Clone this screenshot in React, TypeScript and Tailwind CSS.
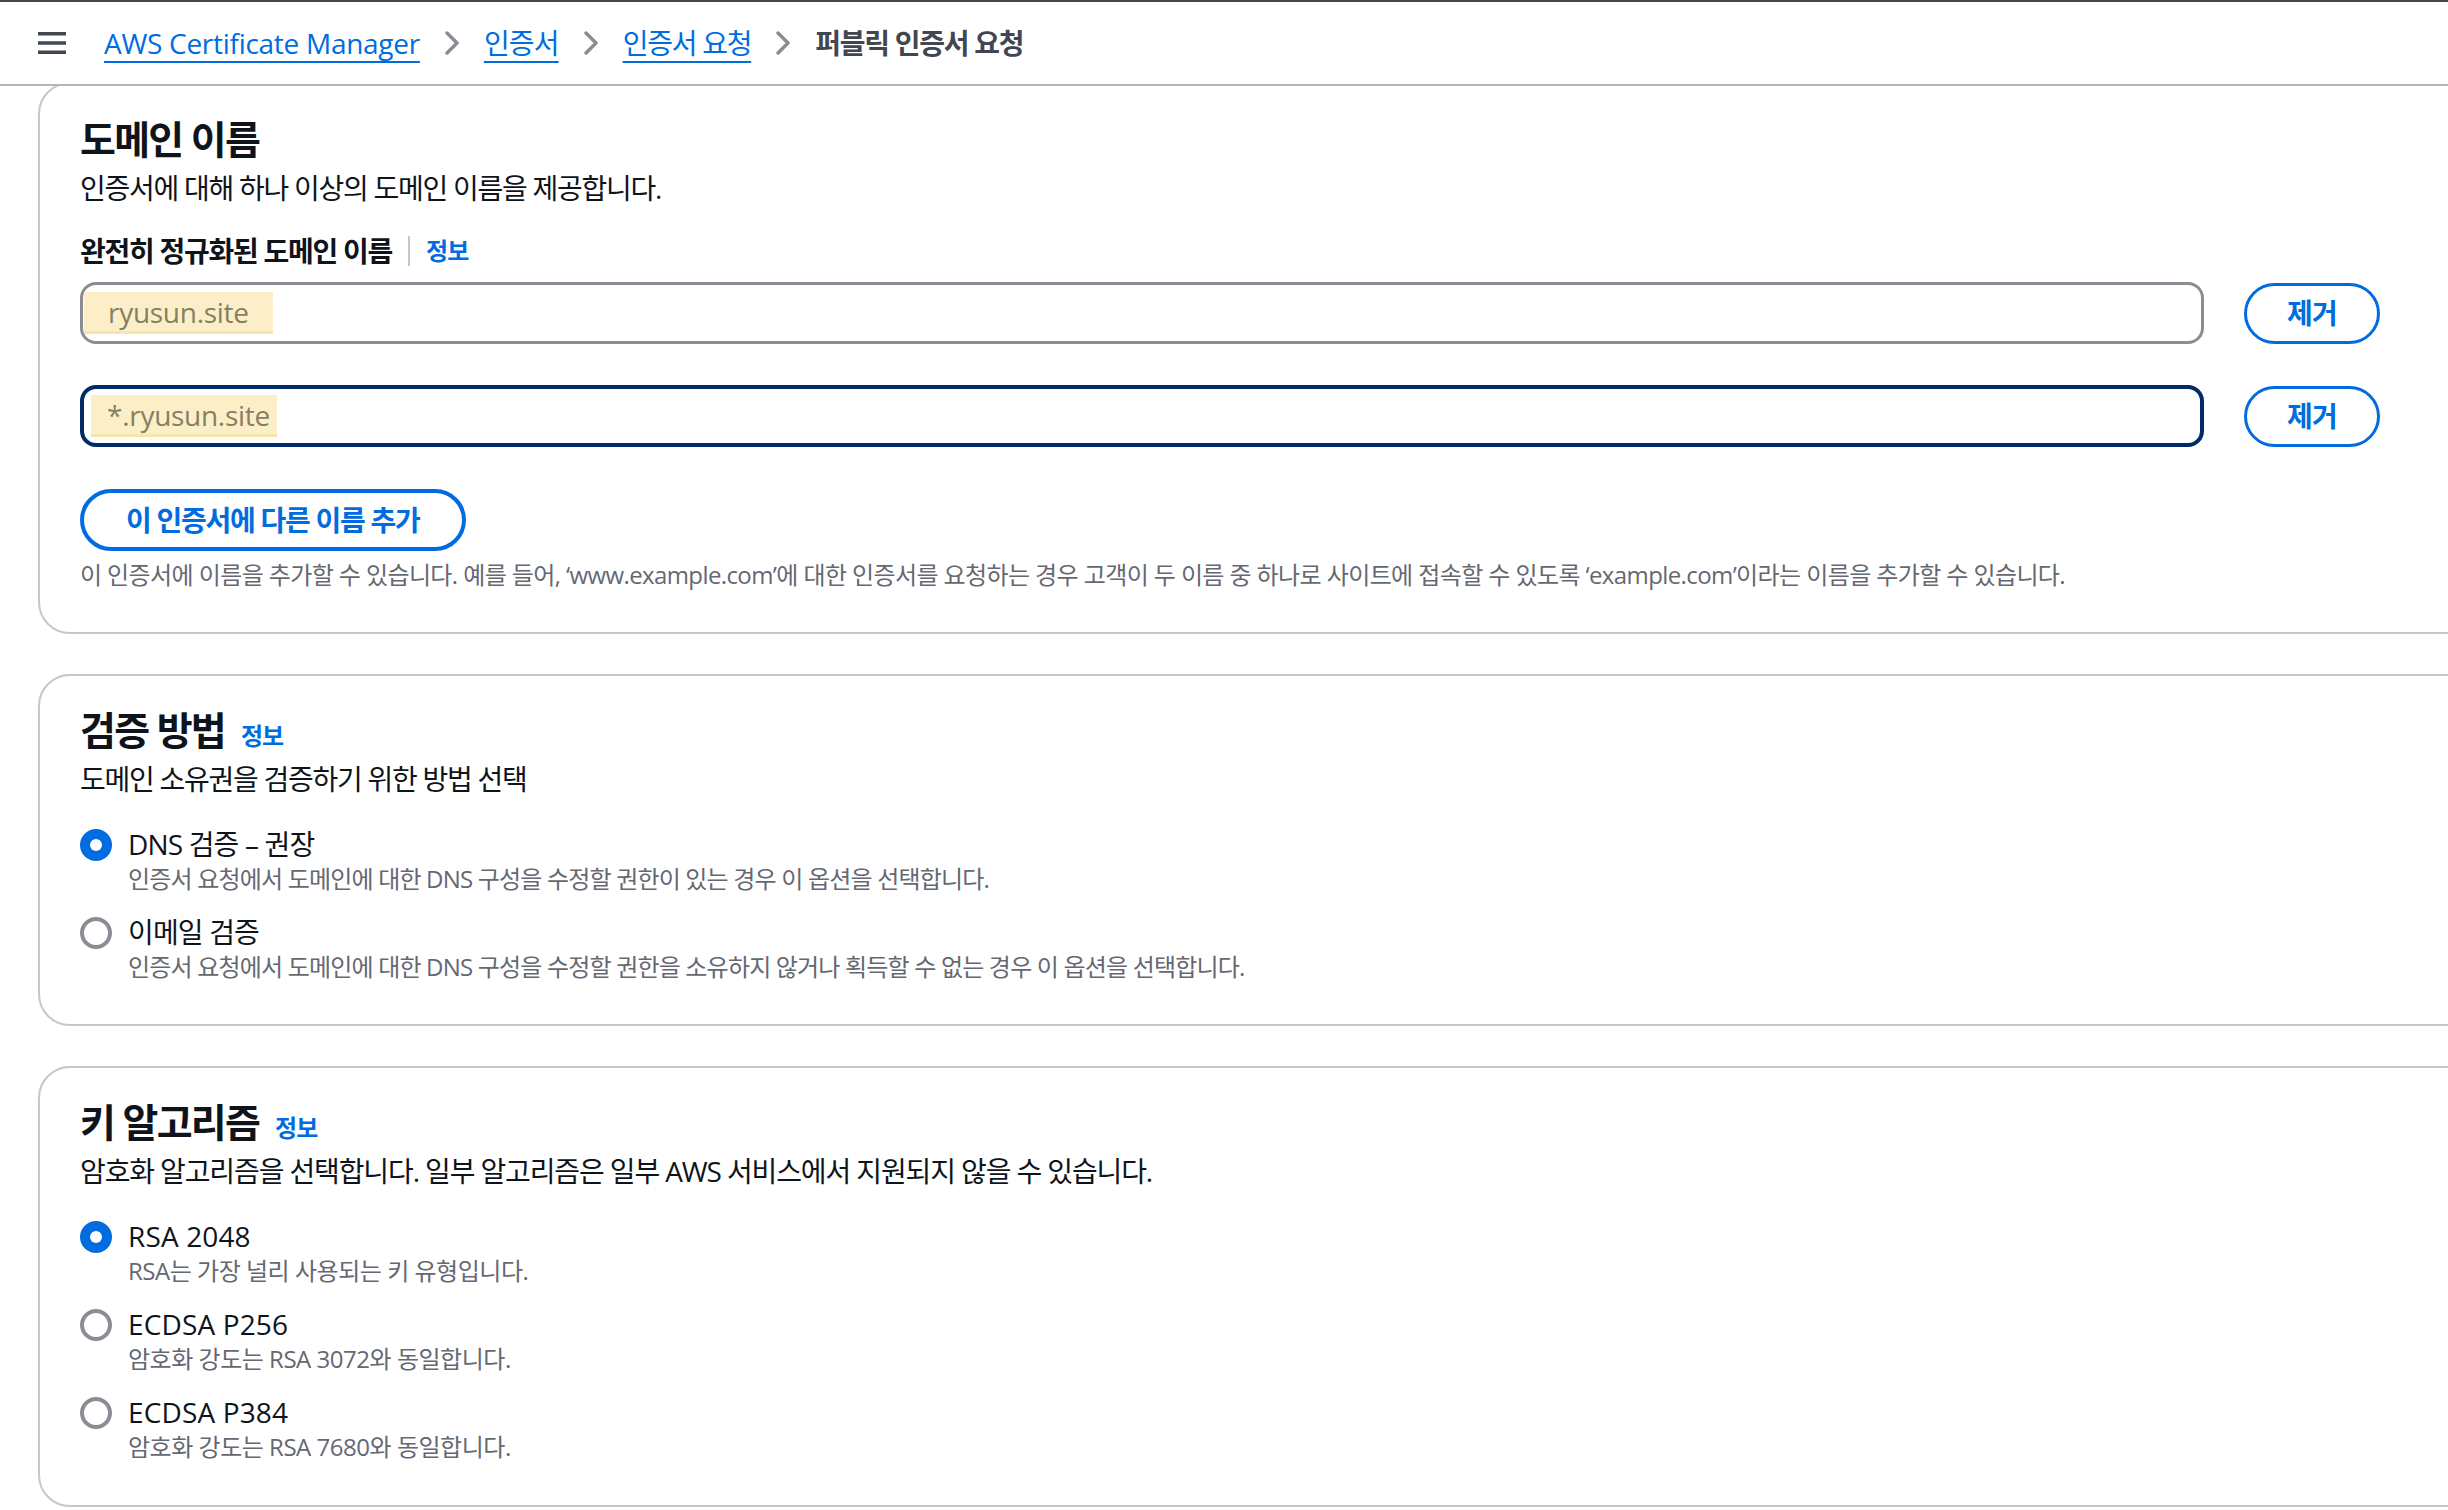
import React from 'react';

const FONT = { fontFamily: '"Open Sans", "Noto Sans CJK KR", sans-serif' };

function Chevron() {
  return (
    <svg width="16" height="24" viewBox="0 0 16 24" className="shrink-0">
      <path d="M3 2 L13 12 L3 22" fill="none" stroke="#8c8c94" strokeWidth="3.5" strokeLinecap="round" strokeLinejoin="round" />
    </svg>
  );
}

function InfoLink() {
  return <span className="text-[24px] font-bold leading-[32px] tracking-[-0.04em] text-[#006ce0]">정보</span>;
}

function Radio({ checked }: { checked: boolean }) {
  return (
    <svg width="32" height="32" viewBox="0 0 32 32" className="shrink-0">
      {checked ? (
        <>
          <circle cx="16" cy="16" r="16" fill="#006ce0" />
          <circle cx="16" cy="16" r="6" fill="#fff" />
        </>
      ) : (
        <circle cx="16" cy="16" r="14" fill="#fff" stroke="#8c8c94" strokeWidth="4" />
      )}
    </svg>
  );
}

type Option = { label: string; desc: string; checked: boolean; latin?: boolean };

const VALIDATION: Option[] = [
  { label: 'DNS 검증 – 권장', desc: '인증서 요청에서 도메인에 대한 DNS 구성을 수정할 권한이 있는 경우 이 옵션을 선택합니다.', checked: true },
  { label: '이메일 검증', desc: '인증서 요청에서 도메인에 대한 DNS 구성을 수정할 권한을 소유하지 않거나 획득할 수 없는 경우 이 옵션을 선택합니다.', checked: false },
];

const ALGORITHMS: Option[] = [
  { label: 'RSA 2048', desc: 'RSA는 가장 널리 사용되는 키 유형입니다.', checked: true, latin: true },
  { label: 'ECDSA P256', desc: '암호화 강도는 RSA 3072와 동일합니다.', checked: false, latin: true },
  { label: 'ECDSA P384', desc: '암호화 강도는 RSA 7680와 동일합니다.', checked: false, latin: true },
];

function RadioGroup({ items }: { items: Option[] }) {
  return (
    <div className="mt-[27px] flex flex-col gap-[19px]">
      {items.map((it) => (
        <div key={it.label} className="flex gap-[16px]">
          <div className="pt-[3px]">
            <Radio checked={it.checked} />
          </div>
          <div className="flex flex-col">
            <span className={`text-[28px] leading-[36px] text-[#0f141a] ${it.latin ? 'tracking-[0.005em]' : 'tracking-[-0.03em]'}`}>
              {it.label}
            </span>
            <span className={`mt-[1px] text-[24px] leading-[32px] text-[#656871] ${it.latin ? 'tracking-[-0.02em]' : 'tracking-[-0.034em]'}`}>
              {it.desc}
            </span>
          </div>
        </div>
      ))}
    </div>
  );
}

function DomainInput({ value, focused }: { value: string; focused?: boolean }) {
  return (
    <div className="flex items-center gap-[40px]">
      <div
        className={`flex h-[62px] flex-1 items-center rounded-[16px] bg-white ${
          focused ? 'border-[4px] border-[#002b66] pl-[7px]' : 'border-[3px] border-[#8c8c94] pl-[1px]'
        }`}
      >
        <span
          className={`flex h-[42px] items-center border-b-[3px] border-[#f6e6ae] bg-[#fcefc8] text-[28px] tracking-[-0.01em] text-[#857f63] ${
            focused ? 'pl-[16px] pr-[7px]' : 'pl-[24px] pr-[24px]'
          }`}
        >
          {value}
        </span>
      </div>
      <button className="mr-[66px] h-[61px] w-[136px] rounded-full border-[3px] border-[#006ce0] text-[28px] font-bold tracking-[-0.03em] text-[#006ce0]">
        제거
      </button>
    </div>
  );
}

export default function App() {
  return (
    <div className="relative h-[1510px] w-[2448px] overflow-hidden bg-white" style={FONT}>
      <div className="h-[2px] bg-[#3f4650]" />
      <header className="relative z-10 flex h-[84px] items-center gap-[38px] border-b-2 border-[#b4b4bb] bg-white pl-[38px]">
        <svg width="28" height="24" viewBox="0 0 28 24" className="shrink-0">
          <rect x="0" y="1" width="28" height="3.5" fill="#414750" />
          <rect x="0" y="10.25" width="28" height="3.5" fill="#414750" />
          <rect x="0" y="19.5" width="28" height="3.5" fill="#414750" />
        </svg>
        <nav className="flex items-center gap-[24px] text-[28px] leading-[40px]">
          <a className="text-[#006ce0] underline decoration-2 underline-offset-[7px] tracking-[-0.01em]">AWS Certificate Manager</a>
          <Chevron />
          <a className="text-[#006ce0] underline decoration-2 underline-offset-[7px] tracking-[-0.03em]">인증서</a>
          <Chevron />
          <a className="text-[#006ce0] underline decoration-2 underline-offset-[7px] tracking-[-0.045em]">인증서 요청</a>
          <Chevron />
          <span className="font-bold tracking-[-0.045em] text-[#424650]">퍼블릭 인증서 요청</span>
        </nav>
      </header>

      <main className="-mt-[4px] flex flex-col gap-[40px] pl-[38px]">
        {/* 도메인 이름 */}
        <section className="-mr-[40px] rounded-[32px] border-2 border-[#c6c6cd] px-[40px] pt-[33px] pb-[41px]">
          <h2 className="text-[39px] font-bold leading-[44px] tracking-[-0.045em] text-[#0f141a]">도메인 이름</h2>
          <p className="mt-[7px] text-[28px] leading-[40px] tracking-[-0.045em] text-[#0f141a]">
            인증서에 대해 하나 이상의 도메인 이름을 제공합니다.
          </p>
          <div className="mt-[23px] flex items-center text-[28px] leading-[40px]">
            <span className="font-bold tracking-[-0.045em] text-[#0f141a]">완전히 정규화된 도메인 이름</span>
            <span className="mx-[16px] h-[30px] w-[2px] bg-[#c6c6cd]" />
            <InfoLink />
          </div>
          <div className="mt-[11px] flex flex-col gap-[41px]">
            <DomainInput value="ryusun.site" />
            <DomainInput value="*.ryusun.site" focused />
          </div>
          <button className="mt-[42px] h-[62px] rounded-full border-[4px] border-[#006ce0] px-[42px] text-[28px] font-bold tracking-[-0.045em] text-[#006ce0]">
            이 인증서에 다른 이름 추가
          </button>
          <p className="mt-[8px] text-[24px] leading-[32px] tracking-[-0.025em] text-[#656871]">
            이 인증서에 이름을 추가할 수 있습니다. 예를 들어, ‘www.example.com’에 대한 인증서를 요청하는 경우 고객이 두 이름 중 하나로 사이트에 접속할 수 있도록 ‘example.com’이라는 이름을 추가할 수 있습니다.
          </p>
        </section>

        {/* 검증 방법 */}
        <section className="-mr-[40px] rounded-[32px] border-2 border-[#c6c6cd] px-[40px] pt-[32px] pb-[41px]">
          <div className="flex items-baseline gap-[16px]">
            <h2 className="text-[39px] font-bold leading-[44px] tracking-[-0.045em] text-[#0f141a]">검증 방법</h2>
            <InfoLink />
          </div>
          <p className="mt-[7px] text-[28px] leading-[40px] tracking-[-0.045em] text-[#0f141a]">도메인 소유권을 검증하기 위한 방법 선택</p>
          <RadioGroup items={VALIDATION} />
        </section>

        {/* 키 알고리즘 */}
        <section className="-mr-[40px] rounded-[32px] border-2 border-[#c6c6cd] px-[40px] pt-[32px] pb-[42px]">
          <div className="flex items-baseline gap-[16px]">
            <h2 className="text-[39px] font-bold leading-[44px] tracking-[-0.045em] text-[#0f141a]">키 알고리즘</h2>
            <InfoLink />
          </div>
          <p className="mt-[7px] text-[28px] leading-[40px] tracking-[-0.04em] text-[#0f141a]">
            암호화 알고리즘을 선택합니다. 일부 알고리즘은 일부 AWS 서비스에서 지원되지 않을 수 있습니다.
          </p>
          <RadioGroup items={ALGORITHMS} />
        </section>
      </main>
    </div>
  );
}
